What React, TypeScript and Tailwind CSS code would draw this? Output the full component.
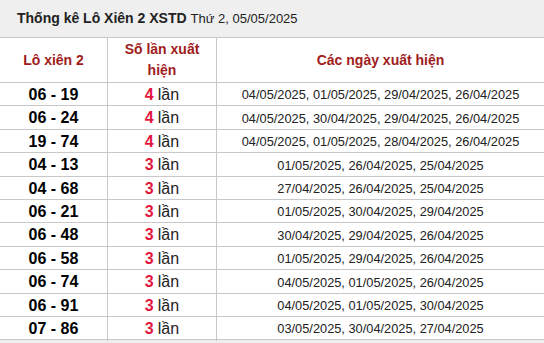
import React from "react";

const rows: [string, number, string][] = [
  ["06 - 19", 4, "04/05/2025, 01/05/2025, 29/04/2025, 26/04/2025"],
  ["06 - 24", 4, "04/05/2025, 30/04/2025, 29/04/2025, 26/04/2025"],
  ["19 - 74", 4, "04/05/2025, 01/05/2025, 28/04/2025, 26/04/2025"],
  ["04 - 13", 3, "01/05/2025, 26/04/2025, 25/04/2025"],
  ["04 - 68", 3, "27/04/2025, 26/04/2025, 25/04/2025"],
  ["06 - 21", 3, "01/05/2025, 30/04/2025, 29/04/2025"],
  ["06 - 48", 3, "30/04/2025, 29/04/2025, 26/04/2025"],
  ["06 - 58", 3, "01/05/2025, 29/04/2025, 26/04/2025"],
  ["06 - 74", 3, "04/05/2025, 01/05/2025, 26/04/2025"],
  ["06 - 91", 3, "04/05/2025, 01/05/2025, 30/04/2025"],
  ["07 - 86", 3, "03/05/2025, 30/04/2025, 27/04/2025"],
];

export default function App() {
  return (
    <div
      className="w-[544px] h-[343px] bg-white text-[#222] overflow-hidden"
      style={{ fontFamily: '"Liberation Sans", Arial, sans-serif' }}
    >
      <div className="h-[38px] bg-[#efefef] border-b border-[#c8c8c8] flex items-center pl-[17px] text-[14px]">
        <span className="font-bold">Thống kê Lô Xiên 2 XSTD</span>
        <span className="ml-[4px] text-[13px]">Thứ 2, 05/05/2025</span>
      </div>
      <div className="grid grid-cols-[108px_109px_1fr] h-[45px] border-b border-[#c8c8c8] text-[14px] font-bold text-[#a01c1c]">
        <div className="border-r border-[#c8c8c8] flex items-center justify-center">Lô xiên 2</div>
        <div className="border-r border-[#c8c8c8] flex items-center justify-center text-center leading-[21px] px-2">
          Số lần xuất hiện
        </div>
        <div className="flex items-center justify-center">Các ngày xuất hiện</div>
      </div>
      {rows.map(([pair, n, dates]) => (
        <div
          key={pair}
          className="grid grid-cols-[108px_109px_1fr] h-[23.4px] border-b border-[#c8c8c8]"
        >
          <div className="border-r border-[#c8c8c8] flex items-center justify-center text-[16px] font-bold text-black">
            {pair}
          </div>
          <div className="border-r border-[#c8c8c8] flex items-center justify-center text-[16px]">
            <span className="font-bold text-[#e3173e]">{n}</span>
            <span className="ml-[4px] text-[#222]">lần</span>
          </div>
          <div className="flex items-center justify-center text-[12.8px] text-[#222]">{dates}</div>
        </div>
      ))}
      <div className="h-[4px] bg-[#efefef]" />
    </div>
  );
}
